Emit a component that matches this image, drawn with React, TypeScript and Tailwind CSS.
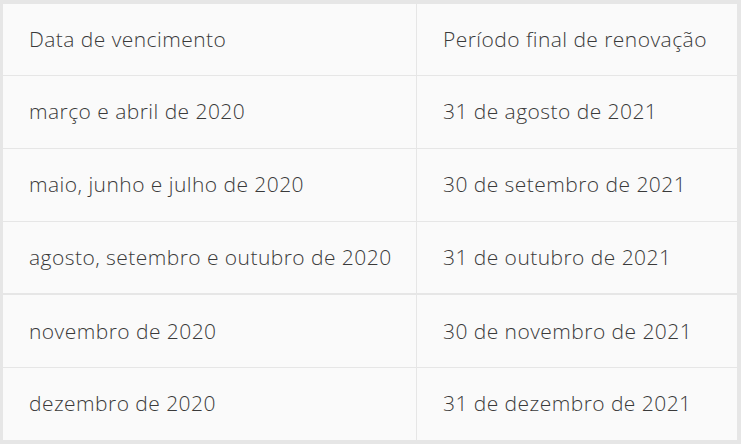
import React from "react";

const rows: [string, string][] = [
  ["março e abril de 2020", "31 de agosto de 2021"],
  ["maio, junho e julho de 2020", "30 de setembro de 2021"],
  ["agosto, setembro e outubro de 2020", "31 de outubro de 2021"],
  ["novembro de 2020", "30 de novembro de 2021"],
  ["dezembro de 2020", "31 de dezembro de 2021"],
];

export default function App() {
  return (
    <div
      className="w-[741px] h-[444px] bg-[#e6e6e6] pt-[4px] pl-[3px] pr-[4px] pb-[4px] text-[#3a3a3a] text-[21px] font-light tracking-[0.45px]"
      style={{ fontFamily: '"Open Sans", sans-serif' }}
    >
      <div className="w-full h-full bg-[#fafafa] flex flex-col">
        <div className="grid grid-cols-[414px_1fr] h-[72px] border-b border-[#e6e6e6]">
          <div className="flex items-center pl-[26px] border-r border-[#e6e6e6]">Data de vencimento</div>
          <div className="flex items-center pl-[26px]">Período final de renovação</div>
        </div>
        {rows.map(([a, b], i) => (
          <div
            key={i}
            className={`grid grid-cols-[414px_1fr] flex-1 ${i < rows.length - 1 ? (i === 2 ? "border-b-2 border-[#e6e6e6]" : "border-b border-[#e6e6e6]") : ""}`}
          >
            <div className="flex items-center pl-[26px] border-r border-[#e6e6e6]">{a}</div>
            <div className="flex items-center pl-[26px]">{b}</div>
          </div>
        ))}
      </div>
    </div>
  );
}
